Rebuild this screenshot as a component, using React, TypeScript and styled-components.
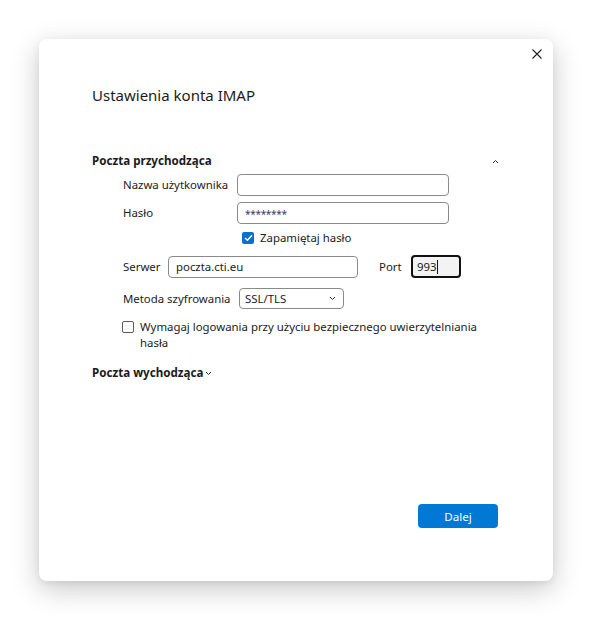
import React from "react";
import styled, { createGlobalStyle } from "styled-components";

const Global = createGlobalStyle`
  html, body { margin: 0; padding: 0; background: #ffffff; }
  body { font-family: "Segoe UI", "Noto Sans", "Open Sans", sans-serif; color: #1b1b1b; }
`;

const Page = styled.div`
  width: 592px;
  height: 620px;
  padding: 39px 0 0 39px;
  box-sizing: border-box;
`;

const Dialog = styled.div`
  position: relative;
  width: 514px;
  height: 542px;
  background: #fff;
  border-radius: 8px;
  box-shadow: 0 8px 28px rgba(0, 0, 0, 0.22), 0 2px 6px rgba(0, 0, 0, 0.06);
  box-sizing: border-box;
  padding: 46px 54px 0 53px;
  display: flex;
  flex-direction: column;
`;

const Close = styled.button`
  position: absolute;
  top: 8px;
  right: 9px;
  width: 14px;
  height: 14px;
  padding: 0;
  border: none;
  background: none;
  display: flex;
  align-items: center;
  justify-content: center;
`;

const Title = styled.h1`
  margin: 0;
  font-size: 15px;
  font-weight: 400;
  line-height: 20px;
  color: #1b1b1b;
`;

const SectionHeader = styled.div<{ $gap?: number }>`
  display: flex;
  align-items: center;
  justify-content: space-between;
  font-size: 11.6px;
  font-weight: 700;
  line-height: 16px;
  margin-top: ${(p) => p.$gap ?? 0}px;
`;

const HeaderLabel = styled.span`
  display: flex;
  align-items: center;
  gap: 2px;
`;

const Body = styled.div`
  padding-left: 31px;
  display: flex;
  flex-direction: column;
`;

const Row = styled.div<{ $mt: number }>`
  display: flex;
  align-items: center;
  margin-top: ${(p) => p.$mt}px;
  font-size: 11.4px;
  line-height: 16px;
`;

const Label = styled.span<{ $w?: number }>`
  width: ${(p) => (p.$w ? `${p.$w}px` : "auto")};
  flex: none;
  color: #1b1b1b;
`;

const PortLabel = styled(Label)`
  margin-left: 21px;
  width: 32px;
`;

const Input = styled.div<{ $w: number }>`
  width: ${(p) => p.$w}px;
  height: 22px;
  box-sizing: border-box;
  border: 1px solid #8a8a8a;
  border-radius: 4px;
  padding: 0 7px;
  display: flex;
  align-items: center;
  font-size: 11.4px;
  color: #1b1b1b;
`;

const Stars = styled.span`
  font-size: 10px;
  letter-spacing: -0.3px;
  color: #3a3a6a;
  margin-top: 2px;
`;

const PortInput = styled.div`
  width: 50px;
  height: 23px;
  box-sizing: border-box;
  border: 2px solid #111;
  border-radius: 4px;
  background: #f3f3f3;
  padding: 0 4px;
  display: flex;
  align-items: center;
  font-size: 11.4px;
`;

const Caret = styled.span`
  width: 1px;
  height: 14px;
  background: #111;
`;

const Select = styled.div`
  width: 105px;
  height: 21px;
  box-sizing: border-box;
  border: 1px solid #8a8a8a;
  border-radius: 4px;
  padding: 0 7px 0 5px;
  display: flex;
  align-items: center;
  justify-content: space-between;
  font-size: 11.4px;
`;

const Check = styled.span<{ $on?: boolean }>`
  width: 12px;
  height: 12px;
  box-sizing: border-box;
  border-radius: 2px;
  flex: none;
  margin-top: 2px;
  border: ${(p) => (p.$on ? "none" : "1px solid #5a5a5a")};
  background: ${(p) => (p.$on ? "#0a6fcf" : "#fff")};
  display: flex;
  align-items: center;
  justify-content: center;
`;

const CheckRow = styled.div<{ $mt: number; $indent: number }>`
  display: flex;
  align-items: flex-start;
  gap: 6px;
  margin-top: ${(p) => p.$mt}px;
  margin-left: ${(p) => p.$indent}px;
  font-size: 11.4px;
  line-height: 16px;
`;

const CheckText = styled.span`
  max-width: 345px;
`;

const Footer = styled.div`
  margin-top: auto;
  margin-bottom: 53px;
  display: flex;
  justify-content: flex-end;
  padding-right: 1px;
`;

const Primary = styled.button`
  width: 80px;
  height: 24px;
  border: none;
  border-radius: 4px;
  background: #0078d4;
  color: #fff;
  font-family: inherit;
  font-size: 11.6px;
`;

const Chevron = ({ up }: { up?: boolean }) => (
  <svg width="7" height="5" viewBox="0 0 7 5">
    <path
      d={up ? "M1 4 L3.5 1.5 L6 4" : "M1 1 L3.5 3.5 L6 1"}
      stroke="#333"
      strokeWidth="1"
      fill="none"
    />
  </svg>
);

export default function App() {
  return (
    <>
      <Global />
      <Page>
        <Dialog>
          <Close aria-label="Zamknij">
            <svg width="10" height="10" viewBox="0 0 10 10">
              <path d="M0.5 0.5 L9.5 9.5 M9.5 0.5 L0.5 9.5" stroke="#222" strokeWidth="1.1" />
            </svg>
          </Close>
          <Title>Ustawienia konta IMAP</Title>
          <SectionHeader $gap={48}>
            <HeaderLabel>Poczta przychodząca</HeaderLabel>
            <Chevron up />
          </SectionHeader>
          <Body>
            <Row $mt={5}>
              <Label $w={114}>Nazwa użytkownika</Label>
              <Input $w={212} />
            </Row>
            <Row $mt={6}>
              <Label $w={114}>Hasło</Label>
              <Input $w={212}>
                <Stars>********</Stars>
              </Input>
            </Row>
            <CheckRow $mt={6} $indent={119}>
              <Check $on>
                <svg width="9" height="8" viewBox="0 0 9 8">
                  <path d="M1 4 L3.4 6.3 L8 1.3" stroke="#fff" strokeWidth="1.4" fill="none" />
                </svg>
              </Check>
              <span>Zapamiętaj hasło</span>
            </CheckRow>
            <Row $mt={9}>
              <Label $w={45}>Serwer</Label>
              <Input $w={190}>poczta.cti.eu</Input>
              <PortLabel>Port</PortLabel>
              <PortInput>
                993<Caret />
              </PortInput>
            </Row>
            <Row $mt={10}>
              <Label $w={116}>Metoda szyfrowania</Label>
              <Select>
                <span>SSL/TLS</span>
                <svg width="7" height="5" viewBox="0 0 7 5">
                  <path d="M1 1 L3.5 3.5 L6 1" stroke="#333" strokeWidth="1" fill="none" />
                </svg>
              </Select>
            </Row>
            <CheckRow $mt={10} $indent={-1}>
              <Check />
              <CheckText>
                Wymagaj logowania przy użyciu bezpiecznego uwierzytelniania hasła
              </CheckText>
            </CheckRow>
          </Body>
          <SectionHeader $gap={14}>
            <HeaderLabel>
              Poczta wychodząca
              <Chevron />
            </HeaderLabel>
          </SectionHeader>
          <Footer>
            <Primary>Dalej</Primary>
          </Footer>
        </Dialog>
      </Page>
    </>
  );
}
